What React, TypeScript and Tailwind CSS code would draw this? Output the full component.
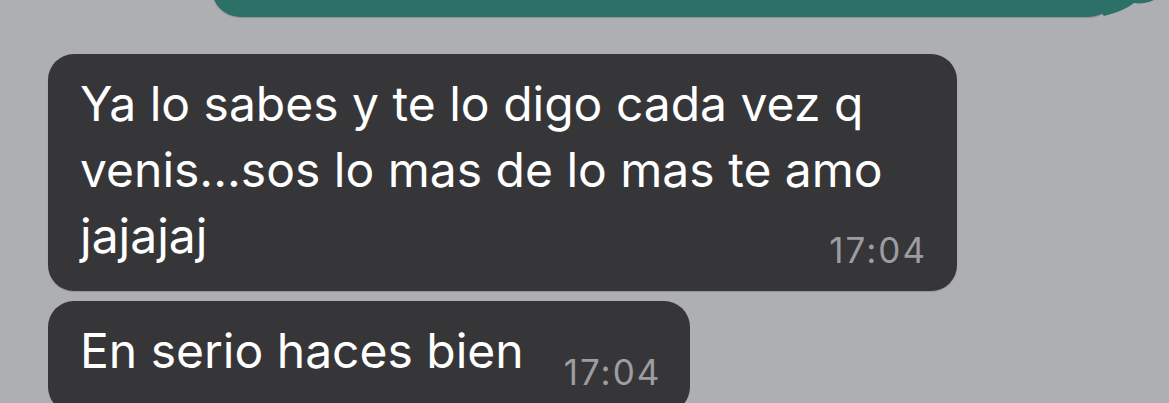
export default function App() {
  return (
    <div className="w-[1169px] h-[403px] overflow-hidden bg-[#aeafb3] relative font-['Inter',sans-serif]">
      {/* outgoing bubble, cut at the top */}
      <div className="absolute left-[212px] top-[-60px] w-[905px] h-[77px] rounded-[28px] bg-[#2d7068] shadow-[0_1px_1px_rgba(0,0,0,0.18)]" />
      <svg className="absolute left-[1090px] top-0" width="70" height="20" viewBox="0 0 70 20">
        <path d="M0 0 H64 C58 3 50 4 44 3 C36 9 26 13 14 16 Z" fill="#2d7068" />
      </svg>

      <div className="flex flex-col items-start gap-[10px] pl-[48px] pt-[54px]">
        <div className="w-[909px] h-[237px] rounded-[26px] bg-[#363638] pl-[32px] pr-[32px] pt-[17px] relative shadow-[0_1px_1px_rgba(0,0,0,0.15)]">
          <p className="text-white text-[48px] leading-[66px]">
            Ya lo sabes y te lo digo cada vez q<br />
            venis...sos lo mas de lo mas te amo<br />
            jajajaj
          </p>
          <span className="absolute right-[30px] bottom-[23px] text-[35px] tracking-[2px] leading-none text-[#9d9da1]">17:04</span>
        </div>

        <div className="w-[642px] h-[112px] rounded-[26px] bg-[#363638] pl-[32px] flex items-start gap-[40px]">
          <span className="text-white text-[48px] leading-[66px] mt-[17px]">En serio haces bien</span>
          <span className="text-[35px] tracking-[2px] leading-none text-[#9d9da1] mt-[54px]">17:04</span>
        </div>
      </div>
    </div>
  );
}
